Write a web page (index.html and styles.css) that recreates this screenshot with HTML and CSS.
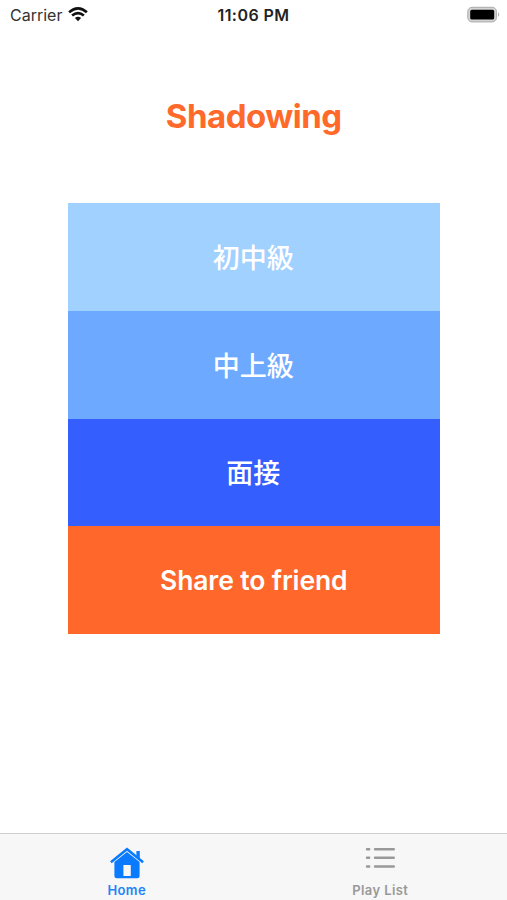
FILE: index.html
```html
<!DOCTYPE html>
<html lang="ja">
<head>
    <meta charset="UTF-8">
    <meta name="viewport" content="width=device-width, initial-scale=1.0">
    <title>Shadowing</title>
    <link rel="stylesheet" href="styles.css">
</head>
<body>

    <!-- Status Bar -->
    <header class="status-bar">
        <div class="carrier">
            <span>Carrier</span>
            <svg class="wifi" width="20" height="15" viewBox="0 0 20 15">
                <path d="M1.1 5.3 Q10 -2.5 18.9 5.3" />
                <path d="M4.1 8.6 Q10 3.5 15.9 8.6" />
                <path class="dot" d="M6.9 11 Q10 8.5 13.1 11 L10 14.2 Z" />
            </svg>
        </div>
        <span class="time">11:06 PM</span>
        <div class="battery">
            <svg width="33" height="18" viewBox="0 0 33 18">
                <rect x="0.8" y="1.3" width="28.6" height="14.6" rx="4.2" fill="#d4d4d4" stroke="#a9a9a9" stroke-width="1" />
                <rect x="3.2" y="3.8" width="24" height="9.7" rx="1.6" fill="#000" />
                <path d="M31 6.2 Q33.4 8.6 31 11 Z" fill="#b0b0b0" />
            </svg>
        </div>
    </header>

    <!-- Main Menu -->
    <main class="content">
        <h1>Shadowing</h1>
        <div class="menu">
            <a href="#" class="menu-item beginner">初中級</a>
            <a href="#" class="menu-item advanced">中上級</a>
            <a href="#" class="menu-item interview">面接</a>
            <a href="#" class="menu-item share">Share to friend</a>
        </div>
    </main>

    <!-- Tab Bar -->
    <nav class="tab-bar">
        <a href="#" class="tab active">
            <svg width="36" height="32" viewBox="0 0 36 32">
                <path d="M1.9 15.2 L18 2.2 L34.1 15.2" fill="none" stroke="#0a7aff" stroke-width="2.5" />
                <path d="M27.4 4 H30.8 V11.4 L27.4 8.6 Z" fill="#0a7aff" />
                <path d="M18 4.9 L30.6 15 V28.9 Q30.6 31.2 28.3 31.2 H7.7 Q5.4 31.2 5.4 28.9 V15 Z" fill="#0a7aff" />
                <rect x="14.4" y="18" width="7.4" height="11" rx="0.6" fill="#f7f7f7" />
            </svg>
            <span>Home</span>
        </a>
        <a href="#" class="tab">
            <svg width="36" height="32" viewBox="0 0 36 32" fill="none" stroke="#999" stroke-width="2.4" stroke-linecap="round">
                <path d="M5 2.2 H7.2 M13 2.2 H31.8" />
                <path d="M5 10.8 H7.2 M13 10.8 H31.8" />
                <path d="M5 19.5 H7.2 M13 19.5 H31.8" />
            </svg>
            <span>Play List</span>
        </a>
    </nav>

</body>
</html>
```

FILE: styles.css
```css
/* General Reset */
* {
    margin: 0;
    padding: 0;
    box-sizing: border-box;
}

body {
    display: flex;
    flex-direction: column;
    height: 100vh;
    overflow: hidden;
    background: #fff;
    font-family: Inter, 'Noto Sans CJK JP', sans-serif;
}

a {
    text-decoration: none;
}

/* Status Bar */
.status-bar {
    display: grid;
    grid-template-columns: 1fr auto 1fr;
    align-items: center;
    height: 29px;
    padding: 0 7px 0 10px;
    font-size: 16px;
    color: #333;
}

.carrier {
    display: flex;
    align-items: center;
    gap: 6px;
}

.wifi path {
    fill: none;
    stroke: #111;
    stroke-width: 2.6;
}

.wifi .dot {
    fill: #111;
    stroke: none;
}

.time {
    margin-right: 3px;
    font-weight: 600;
    letter-spacing: 0.45px;
    color: #222;
}

.battery {
    display: flex;
    justify-content: flex-end;
}

/* Main Menu */
.content {
    flex: 1;
    padding: 66px 67.5px 0 68px;
}

.content h1 {
    height: 108px;
    line-height: 42px;
    text-align: center;
    font-size: 33px;
    font-weight: 700;
    letter-spacing: -0.5px;
    color: #ff6a2b;
}

.menu-item {
    display: flex;
    align-items: center;
    justify-content: center;
    height: 107.8px;
    padding: 0 1px 1px 0;
    font-size: 27px;
    font-weight: 500;
    color: #fff;
}

.beginner {
    background: #a0d1ff;
}

.advanced {
    background: #6daaff;
}

.interview {
    background: #355eff;
}

.share {
    padding: 0;
    font-size: 26.5px;
    font-weight: 600;
    letter-spacing: -0.13px;
    background: #ff682a;
}

/* Tab Bar */
.tab-bar {
    display: flex;
    height: 67px;
    border-top: 1px solid #cfcfcf;
    background: #f7f7f7;
}

.tab {
    flex: 1;
    display: flex;
    flex-direction: column;
    align-items: center;
    padding-top: 13px;
    font-size: 13px;
    line-height: 16px;
    font-weight: 600;
    letter-spacing: 0.4px;
    color: #999;
}

.tab span {
    margin-top: 3px;
}

.tab.active {
    color: #2284f6;
}
```
